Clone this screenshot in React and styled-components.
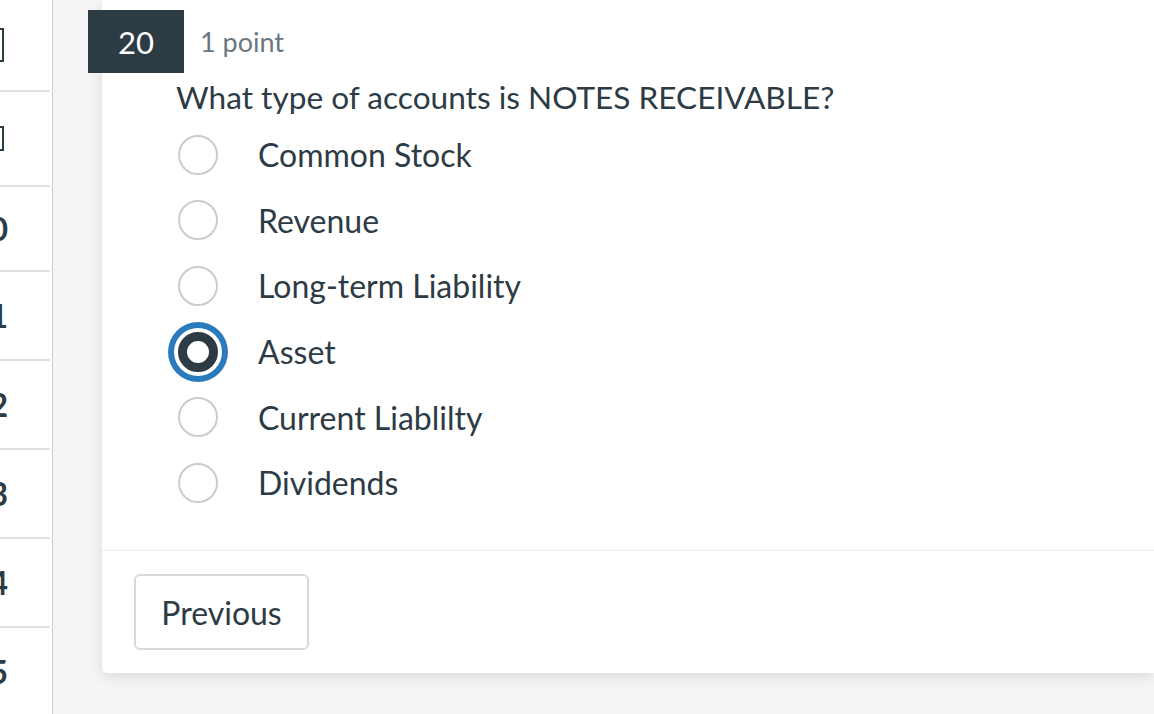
import React from 'react';
import styled, { createGlobalStyle } from 'styled-components';

const GlobalStyle = createGlobalStyle`
  html, body {
    margin: 0;
    padding: 0;
    height: 100%;
    overflow: hidden;
    background: #f5f5f5;
    font-family: Lato, "Open Sans", sans-serif;
    color: #2d3b45;
  }
`;

const Page = styled.div`
  display: flex;
  height: 714px;
`;

const Sidebar = styled.nav`
  width: 52px;
  flex: none;
  background: #fff;
  border-right: 1px solid #c7cdd1;
  overflow: hidden;
`;

const NavItem = styled.div`
  height: ${(p) => p.h}px;
  display: flex;
  align-items: center;
  justify-content: flex-end;
  padding-right: ${(p) => (p.box ? 46 : 42)}px;
  border-bottom: 2px solid #dde1e4;
  margin-right: 2px;
  font-size: 32px;
  font-weight: 700;
  white-space: nowrap;
  box-sizing: border-box;
`;

const NavBox = styled.span`
  display: inline-block;
  flex: none;
  width: ${(p) => p.w}px;
  height: ${(p) => p.h}px;
  border: 2px solid #2d3b45;
  border-left: none;
  box-sizing: border-box;
`;

const Main = styled.main`
  flex: 1;
  padding-left: 49px;
  min-width: 0;
`;

const Card = styled.section`
  background: #fff;
  height: 673px;
  border-bottom-left-radius: 5px;
  box-shadow: 0 4px 14px rgba(0, 0, 0, 0.1);
  display: flex;
  flex-direction: column;
`;

const Header = styled.header`
  display: flex;
  align-items: center;
  gap: 16px;
  margin: 10px 0 0 -14px;
`;

const Badge = styled.div`
  width: 96px;
  height: 63px;
  background: #2d3b45;
  color: #fff;
  font-size: 31px;
  display: flex;
  align-items: center;
  justify-content: center;
`;

const Points = styled.span`
  color: #6b7780;
  font-size: 27px;
`;

const Question = styled.p`
  margin: 6px 0 0 74px;
  font-size: 31.6px;
  line-height: 36px;
`;

const Options = styled.div`
  display: flex;
  flex-direction: column;
  margin: 7px 0 0 76px;
  flex: 1;
`;

const Option = styled.label`
  height: 65.6px;
  display: flex;
  align-items: center;
  font-size: 32px;
`;

const RadioSlot = styled.span`
  width: 40px;
  height: 40px;
  margin-right: 40px;
  display: flex;
  align-items: center;
  justify-content: center;
  flex: none;
`;

const Radio = styled.span`
  box-sizing: border-box;
  width: 40px;
  height: 40px;
  border-radius: 50%;
  flex: none;
  background: #fff;
  border: ${(p) => (p.checked ? '9px solid #2d3b45' : '2px solid #c7cdd1')};
  box-shadow: ${(p) => (p.checked ? '0 0 0 4px #fff, 0 0 0 10px #2b7abc' : 'none')};
`;

const Footer = styled.footer`
  border-top: 2px solid #f2f2f2;
  height: 124px;
  box-sizing: border-box;
  padding: 23px 32px;
`;

const Button = styled.button`
  font-family: inherit;
  font-size: 32px;
  color: #2d3b45;
  background: #fff;
  border: 2px solid #d7dadd;
  border-radius: 6px;
  width: 175px;
  height: 76px;
  padding: 0;
`;

const nav = [
  { h: 92, box: { w: 6, h: 34 } },
  { h: 95, box: { w: 8, h: 25 } },
  { h: 85, text: '10' },
  { h: 89, text: '11' },
  { h: 89, text: '12' },
  { h: 89, text: '13' },
  { h: 89, text: '14' },
  { h: 89, text: '15' },
];

const options = ['Common Stock', 'Revenue', 'Long-term Liability', 'Asset', 'Current Liablilty', 'Dividends'];

export default function App() {
  return (
    <>
      <GlobalStyle />
      <Page>
        <Sidebar>
          {nav.map((n, i) => (
            <NavItem key={i} h={n.h} box={!!n.box}>
              {n.box ? <NavBox w={n.box.w} h={n.box.h} /> : n.text}
            </NavItem>
          ))}
        </Sidebar>
        <Main>
          <Card>
            <Header>
              <Badge>20</Badge>
              <Points>1 point</Points>
            </Header>
            <Question>What type of accounts is NOTES RECEIVABLE?</Question>
            <Options>
              {options.map((o) => (
                <Option key={o}>
                  <RadioSlot>
                    <Radio checked={o === 'Asset'} />
                  </RadioSlot>
                  {o}
                </Option>
              ))}
            </Options>
            <Footer>
              <Button>Previous</Button>
            </Footer>
          </Card>
        </Main>
      </Page>
    </>
  );
}
